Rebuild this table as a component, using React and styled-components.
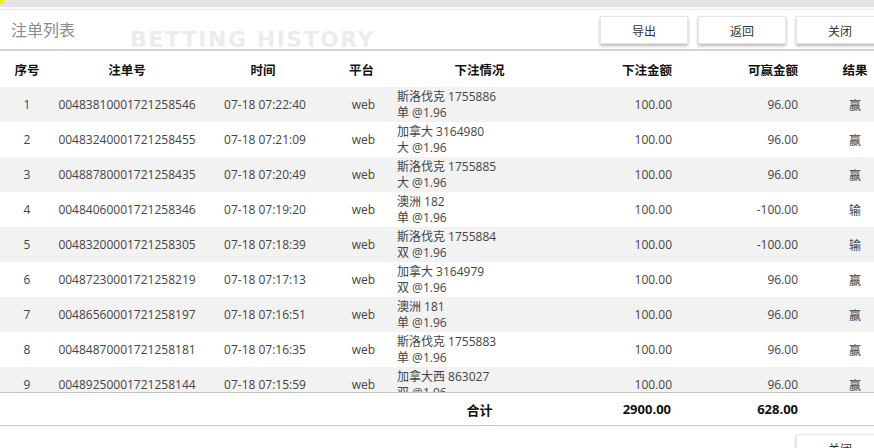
import React from 'react'
import styled, { createGlobalStyle } from 'styled-components'

const GlobalStyle = createGlobalStyle`
  html, body {
    margin: 0;
    background: #fff;
  }
  body {
    font-family: "Open Sans", "Noto Sans CJK SC", sans-serif;
    font-size: 12px;
    color: #444;
  }
`

const COLS = '54px 146px 126px 71px 165px 118px 156px 38px'

const Page = styled.div`
  width: 874px;
  height: 448px;
  overflow: hidden;
  display: flex;
  flex-direction: column;
  & > * {
    flex-shrink: 0;
  }
`

const TopStrip = styled.div`
  height: 7px;
  background: #e4e4e4;
  border-bottom: 2px solid #fafafa;
  box-shadow: 0 1px 0 #ececec;
  display: flex;
`

const Dot = styled.div`
  width: 5px;
  height: 4px;
  border-radius: 0 0 4px 0;
  background: #e8f020;
`

const Header = styled.div`
  height: 40px;
  display: flex;
  align-items: center;
  justify-content: space-between;
  border-bottom: 2px solid #d4d4d4;
  box-shadow: 0 1px 2px rgba(0, 0, 0, 0.12);
  padding-left: 11px;
`

const TitleWrap = styled.div`
  display: flex;
  align-items: center;
  gap: 55px;
`

const Title = styled.div`
  font-family: "Noto Sans CJK SC", sans-serif;
  font-size: 16px;
  color: #8a8a8a;
  margin-top: -1px;
`

const Watermark = styled.div`
  font-family: "DejaVu Sans", sans-serif;
  font-weight: 700;
  font-size: 22px;
  letter-spacing: 1.5px;
  color: #ececec;
  margin-top: 21px;
`

const ButtonGroup = styled.div`
  display: flex;
  gap: 10px;
  margin-right: -10px;
  margin-top: 7px;
  align-self: flex-start;
`

const Button = styled.button`
  width: 88px;
  height: 28px;
  background: #fff;
  border: 1px solid #e6e6e6;
  border-radius: 0;
  box-shadow: 0 2px 3px rgba(0, 0, 0, 0.28);
  font-family: "Noto Sans CJK SC", sans-serif;
  font-size: 12px;
  color: #333;
  padding: 0;
  cursor: pointer;
`

const Row = styled.div`
  display: grid;
  grid-template-columns: ${COLS};
  height: ${p => p.$h || 35}px;
  align-items: center;
  background: ${p => (p.$striped ? '#f2f2f2' : '#fff')};
  font-weight: ${p => (p.$bold ? 700 : 400)};
  color: ${p => (p.$bold ? '#111' : '#444')};
  flex-shrink: 0;
`

const HeadRow = styled(Row)`
  font-family: "Noto Sans CJK SC", sans-serif;
  font-size: 12.5px;
`

const Cell = styled.div`
  text-align: ${p => p.$align || 'center'};
  padding-right: ${p => p.$pr || 0}px;
  padding-left: ${p => p.$pl || 0}px;
  white-space: nowrap;
  overflow: hidden;
`

const Info = styled.div`
  align-self: start;
  padding-top: 2px;
  line-height: 16px;
  white-space: nowrap;
  overflow: hidden;
  color: #444;
`

const Body = styled.div`
  height: 305px;
  overflow: hidden;
  display: flex;
  flex-direction: column;
  border-bottom: 1px solid #c4c4c4;
`

const TotalRow = styled(Row)`
  border-bottom: 1px solid #c8c8c8;
  font-size: 13px;
`

const Footer = styled.div`
  display: flex;
  justify-content: flex-end;
  padding-top: 8px;
  margin-right: -10px;
`

const bets = [
  ['1', '00483810001721258546', '07-18 07:22:40', '斯洛伐克 1755886', '单 @1.96', '96.00', '赢'],
  ['2', '00483240001721258455', '07-18 07:21:09', '加拿大 3164980', '大 @1.96', '96.00', '赢'],
  ['3', '00488780001721258435', '07-18 07:20:49', '斯洛伐克 1755885', '大 @1.96', '96.00', '赢'],
  ['4', '00484060001721258346', '07-18 07:19:20', '澳洲 182', '单 @1.96', '-100.00', '输'],
  ['5', '00483200001721258305', '07-18 07:18:39', '斯洛伐克 1755884', '双 @1.96', '-100.00', '输'],
  ['6', '00487230001721258219', '07-18 07:17:13', '加拿大 3164979', '双 @1.96', '96.00', '赢'],
  ['7', '00486560001721258197', '07-18 07:16:51', '澳洲 181', '单 @1.96', '96.00', '赢'],
  ['8', '00484870001721258181', '07-18 07:16:35', '斯洛伐克 1755883', '单 @1.96', '96.00', '赢'],
  ['9', '00489250001721258144', '07-18 07:15:59', '加拿大西 863027', '双 @1.96', '96.00', '赢']
]

const App = () => {
  return (
    <Page>
      <GlobalStyle />
      <TopStrip><Dot /></TopStrip>
      <Header>
        <TitleWrap>
          <Title>注单列表</Title>
          <Watermark>BETTING HISTORY</Watermark>
        </TitleWrap>
        <ButtonGroup>
          <Button>导出</Button>
          <Button>返回</Button>
          <Button>关闭</Button>
        </ButtonGroup>
      </Header>

      <HeadRow $h={36} $bold>
        <Cell>序号</Cell>
        <Cell>注单号</Cell>
        <Cell>时间</Cell>
        <Cell>平台</Cell>
        <Cell>下注情况</Cell>
        <Cell $align='right' $pr={8}>下注金额</Cell>
        <Cell $align='right' $pr={38}>可赢金额</Cell>
        <Cell>结果</Cell>
      </HeadRow>

      <Body>
        {bets.map((b, i) => (
          <Row key={b[0]} $striped={i % 2 === 0}>
            <Cell>{b[0]}</Cell>
            <Cell>{b[1]}</Cell>
            <Cell $pl={4}>{b[2]}</Cell>
            <Cell $pl={4}>web</Cell>
            <Info>{b[3]}<br />{b[4]}</Info>
            <Cell $align='right' $pr={8}>100.00</Cell>
            <Cell $align='right' $pr={38}>{b[5]}</Cell>
            <Cell>{b[6]}</Cell>
          </Row>
        ))}
      </Body>

      <TotalRow $h={32} $bold>
        <Cell />
        <Cell />
        <Cell />
        <Cell />
        <Cell>合计</Cell>
        <Cell $align='right' $pr={9}>2900.00</Cell>
        <Cell $align='right' $pr={38}>628.00</Cell>
        <Cell />
      </TotalRow>

      <Footer>
        <Button>关闭</Button>
      </Footer>
    </Page>
  )
}

export default App
